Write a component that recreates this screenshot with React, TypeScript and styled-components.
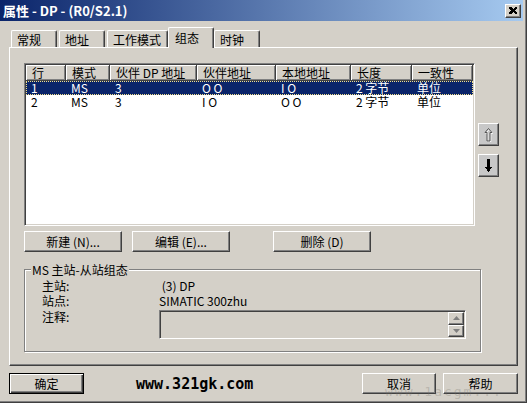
import React from "react";
import styled, { createGlobalStyle } from "styled-components";

const Global = createGlobalStyle`
  html, body { margin: 0; padding: 0; background: #d4d0c8; }
  body {
    font-family: "Noto Sans CJK SC", "Liberation Sans", sans-serif;
    font-size: 12px;
    color: #000;
  }
  * { box-sizing: border-box; }
`;

const FACE = "#d4d0c8";

const Window = styled.div`
  position: relative;
  width: 527px;
  height: 403px;
  background: ${FACE};
  border-right: 1px solid #404040;
  border-bottom: 1px solid #404040;
  box-shadow: inset -1px -1px 0 #808080;
  padding: 0 3px 2px 0;
  display: flex;
  flex-direction: column;
  overflow: hidden;
`;

const TitleBar = styled.div`
  height: 21px;
  flex: none;
  background: linear-gradient(to right, #0a246a, #a6caf0);
  display: flex;
  align-items: center;
  justify-content: space-between;
  padding: 0 2px 0 3px;
`;

const Title = styled.span`
  color: #fff;
  font-weight: bold;
  font-size: 13px;
  line-height: 15px;
  white-space: pre;
`;

const CloseBtn = styled.div`
  width: 16px;
  height: 14px;
  background: ${FACE};
  border-top: 1px solid #fff;
  border-left: 1px solid #fff;
  border-right: 1px solid #404040;
  border-bottom: 1px solid #404040;
  box-shadow: inset -1px -1px 0 #808080;
  display: flex;
  align-items: center;
  justify-content: center;
  padding-bottom: 1px;
`;

const Body = styled.div`
  flex: 1;
  display: flex;
  flex-direction: column;
  padding: 6px 0 0 9px;
`;

const TabStrip = styled.div`
  height: 20px;
  display: flex;
  align-items: flex-end;
  gap: 2px;
  padding-left: 2px;
  position: relative;
  z-index: 1;
`;

const Tab = styled.div<{ $active?: boolean }>`
  min-width: 46px;
  height: ${(p) => (p.$active ? 21 : 17)}px;
  margin: ${(p) => (p.$active ? "0 -2px -1px -2px" : "0")};
  padding: ${(p) => (p.$active ? "2px 6px 0 6px" : "1px 6px 0 5px")};
  background: ${FACE};
  border-top: 1px solid #fff;
  border-left: 1px solid #fff;
  border-right: 1px solid #404040;
  box-shadow: inset -1px 0 0 #808080;
  border-radius: 2px 2px 0 0;
  line-height: 15px;
  white-space: nowrap;
`;

const Panel = styled.div`
  width: 509px;
  height: 319px;
  background: ${FACE};
  border-top: 1px solid #fff;
  border-left: 1px solid #fff;
  border-right: 1px solid #404040;
  border-bottom: 1px solid #404040;
  box-shadow: inset -1px -1px 0 #808080;
  padding: 15px 0 0 14px;
  display: flex;
  flex-direction: column;
`;

const ListArea = styled.div`
  display: flex;
  align-items: flex-start;
`;

const List = styled.div`
  width: 451px;
  height: 163px;
  background: #fff;
  border-top: 1px solid #808080;
  border-left: 1px solid #808080;
  border-right: 1px solid #fff;
  border-bottom: 1px solid #fff;
  box-shadow: inset 1px 1px 0 #404040, inset -1px -1px 0 ${FACE};
  padding: 1px;
`;

const COLS = "40px 44px 87px 79px 75px 61px 61px";

const HeaderRow = styled.div`
  display: grid;
  grid-template-columns: ${COLS};
  height: 16px;
`;

const HeaderCell = styled.div`
  background: ${FACE};
  border-right: 1px solid #404040;
  border-bottom: 1px solid #404040;
  box-shadow: inset 1px 1px 0 #fff, inset -1px -1px 0 #808080;
  padding-left: 6px;
  line-height: 15px;
  white-space: pre;
`;

const DataRow = styled.div<{ $selected?: boolean }>`
  display: grid;
  grid-template-columns: ${COLS};
  height: 14px;
  line-height: 14px;
  background: ${(p) => (p.$selected ? "#0a246a" : "transparent")};
  color: ${(p) => (p.$selected ? "#fff" : "#000")};
  outline: ${(p) => (p.$selected ? "1px dotted #f3e08a" : "none")};
  outline-offset: -1px;
`;

const Cell = styled.div`
  padding-left: 5px;
  white-space: pre;
`;

const SideCol = styled.div`
  display: flex;
  flex-direction: column;
  gap: 8px;
  margin: 60px 0 0 3px;
`;

const ArrowBtn = styled.div`
  width: 21px;
  height: 23px;
  background: #c8c8c8;
  border-top: 1px solid #fff;
  border-left: 1px solid #fff;
  border-right: 1px solid #404040;
  border-bottom: 1px solid #404040;
  box-shadow: inset -1px -1px 0 #808080;
  display: flex;
  align-items: center;
  justify-content: center;
`;

const ButtonRow = styled.div`
  display: flex;
  margin-top: 5px;
`;

const PushButton = styled.div<{ $w: number; $ml?: number; $default?: boolean }>`
  width: ${(p) => p.$w}px;
  height: 21px;
  margin-left: ${(p) => p.$ml ?? 0}px;
  background: ${FACE};
  ${(p) =>
    p.$default
      ? `border: 1px solid #000;
         box-shadow: inset 1px 1px 0 #fff, inset -1px -1px 0 #404040, inset -2px -2px 0 #808080;`
      : `border-top: 1px solid #fff;
         border-left: 1px solid #fff;
         border-right: 1px solid #404040;
         border-bottom: 1px solid #404040;
         box-shadow: inset -1px -1px 0 #808080;`}
  display: flex;
  align-items: center;
  justify-content: center;
  line-height: 15px;
  white-space: pre;
`;

const GroupBox = styled.div`
  position: relative;
  width: 457px;
  height: 83px;
  margin-top: 17px;
  border: 1px solid #808080;
  box-shadow: inset 1px 1px 0 #fff, 1px 1px 0 #fff;
  padding: 8px 0 0 17px;
`;

const GroupLegend = styled.span`
  position: absolute;
  top: -8px;
  left: 6px;
  padding: 0 1px;
  background: ${FACE};
  line-height: 15px;
  white-space: pre;
`;

const InfoGrid = styled.div`
  display: grid;
  grid-template-columns: 117px 307px;
  grid-auto-rows: 15px;
  line-height: 15px;
`;

const InfoLabel = styled.div`
  white-space: pre;
`;

const InfoValue = styled.div`
  white-space: pre;
`;

const CommentBox = styled.div`
  grid-column: 2;
  margin-top: 2px;
  height: 29px;
  width: 307px;
  background: ${FACE};
  border-top: 1px solid #808080;
  border-left: 1px solid #808080;
  border-right: 1px solid #fff;
  border-bottom: 1px solid #fff;
  box-shadow: inset 1px 1px 0 #404040, inset -1px -1px 0 ${FACE};
  display: flex;
  justify-content: flex-end;
  padding: 1px 1px 1px 0;
`;

const SpinCol = styled.div`
  display: flex;
  flex-direction: column;
`;

const SpinBtn = styled.div`
  width: 16px;
  height: 13px;
  background: ${FACE};
  border-top: 1px solid #fff;
  border-left: 1px solid #fff;
  border-right: 1px solid #404040;
  border-bottom: 1px solid #404040;
  box-shadow: inset -1px -1px 0 #808080;
  display: flex;
  align-items: center;
  justify-content: center;
`;

const InfoRow3Label = styled(InfoLabel)`
  margin-top: 1px;
`;

const BottomBar = styled.div`
  display: flex;
  align-items: center;
  margin-top: 7px;
  padding-right: 5px;
`;

const Site = styled.span`
  margin-left: 52px;
  font-family: "DejaVu Sans Mono", "Liberation Mono", monospace;
  font-weight: bold;
  font-size: 15px;
  line-height: 18px;
  color: #000;
  white-space: pre;
`;

const Spacer = styled.div`
  flex: 1;
`;

const Watermark = styled.span`
  position: absolute;
  left: 385px;
  top: 385px;
  font-family: "DejaVu Sans Mono", monospace;
  font-size: 13px;
  line-height: 14px;
  letter-spacing: 2px;
  color: rgba(120, 116, 108, 0.3);
  white-space: pre;
  pointer-events: none;
`;

const columns = ["行", "模式", "伙伴 DP 地址", "伙伴地址", "本地地址", "长度", "一致性"];
const rows = [
  ["1", "MS", "3", "O O", "I O", "2 字节", "单位"],
  ["2", "MS", "3", "I O", "O O", "2 字节", "单位"],
];

const CloseIcon = () => (
  <svg width="8" height="7" viewBox="0 0 8 7" shapeRendering="crispEdges">
    <path d="M0 0h2l2 2 2-2h2v1L6 3.5 8 6v1H6L4 5 2 7H0V6l2-2.5L0 1z" fill="#000" />
  </svg>
);

const UpArrow = () => (
  <svg width="9" height="15" viewBox="0 0 9 15">
    <polygon points="4.5,1.5 8,5.5 6,5.5 6,14 3,14 3,5.5 1,5.5" fill="none" stroke="#fff" strokeWidth="1" transform="translate(0.8,0.8)" />
    <polygon points="4.5,1.5 8,5.5 6,5.5 6,14 3,14 3,5.5 1,5.5" fill="none" stroke="#555" strokeWidth="1" />
  </svg>
);

const DownArrow = () => (
  <svg width="7" height="13" viewBox="0 0 7 13" shapeRendering="crispEdges">
    <polygon points="2,0 5,0 5,8 7,8 3.5,13 0,8 2,8" fill="#000" />
  </svg>
);

const SpinTri = ({ up }: { up?: boolean }) => (
  <svg width="7" height="4" viewBox="0 0 7 4">
    <polygon points={up ? "3.5,0 7,4 0,4" : "0,0 7,0 3.5,4"} fill="#808080" />
  </svg>
);

export default function App() {
  return (
    <>
      <Global />
      <Window>
        <TitleBar>
          <Title>属性 - DP - (R0/S2.1)</Title>
          <CloseBtn>
            <CloseIcon />
          </CloseBtn>
        </TitleBar>
        <Body>
          <TabStrip>
            <Tab>常规</Tab>
            <Tab>地址</Tab>
            <Tab>工作模式</Tab>
            <Tab $active>组态</Tab>
            <Tab>时钟</Tab>
          </TabStrip>
          <Panel>
            <ListArea>
              <List>
                <HeaderRow>
                  {columns.map((c) => (
                    <HeaderCell key={c}>{c}</HeaderCell>
                  ))}
                </HeaderRow>
                {rows.map((r, i) => (
                  <DataRow key={i} $selected={i === 0}>
                    {r.map((v, j) => (
                      <Cell key={j}>{v}</Cell>
                    ))}
                  </DataRow>
                ))}
              </List>
              <SideCol>
                <ArrowBtn>
                  <UpArrow />
                </ArrowBtn>
                <ArrowBtn>
                  <DownArrow />
                </ArrowBtn>
              </SideCol>
            </ListArea>
            <ButtonRow>
              <PushButton $w={98}>新建 (N)...</PushButton>
              <PushButton $w={98} $ml={10}>编辑 (E)...</PushButton>
              <PushButton $w={98} $ml={43}>删除 (D)</PushButton>
            </ButtonRow>
            <GroupBox>
              <GroupLegend>MS 主站-从站组态</GroupLegend>
              <InfoGrid>
                <InfoLabel>主站:</InfoLabel>
                <InfoValue> (3) DP</InfoValue>
                <InfoLabel>站点:</InfoLabel>
                <InfoValue>SIMATIC 300zhu</InfoValue>
                <InfoRow3Label>注释:</InfoRow3Label>
                <CommentBox>
                  <SpinCol>
                    <SpinBtn>
                      <SpinTri up />
                    </SpinBtn>
                    <SpinBtn>
                      <SpinTri />
                    </SpinBtn>
                  </SpinCol>
                </CommentBox>
              </InfoGrid>
            </GroupBox>
          </Panel>
          <BottomBar>
            <PushButton $w={75} $default>确定</PushButton>
            <Site>www.321gk.com</Site>
            <Spacer />
            <PushButton $w={74}>取消</PushButton>
            <PushButton $w={75} $ml={7}>帮助</PushButton>
          </BottomBar>
        </Body>
        <Watermark>www.1acgm...</Watermark>
      </Window>
    </>
  );
}
